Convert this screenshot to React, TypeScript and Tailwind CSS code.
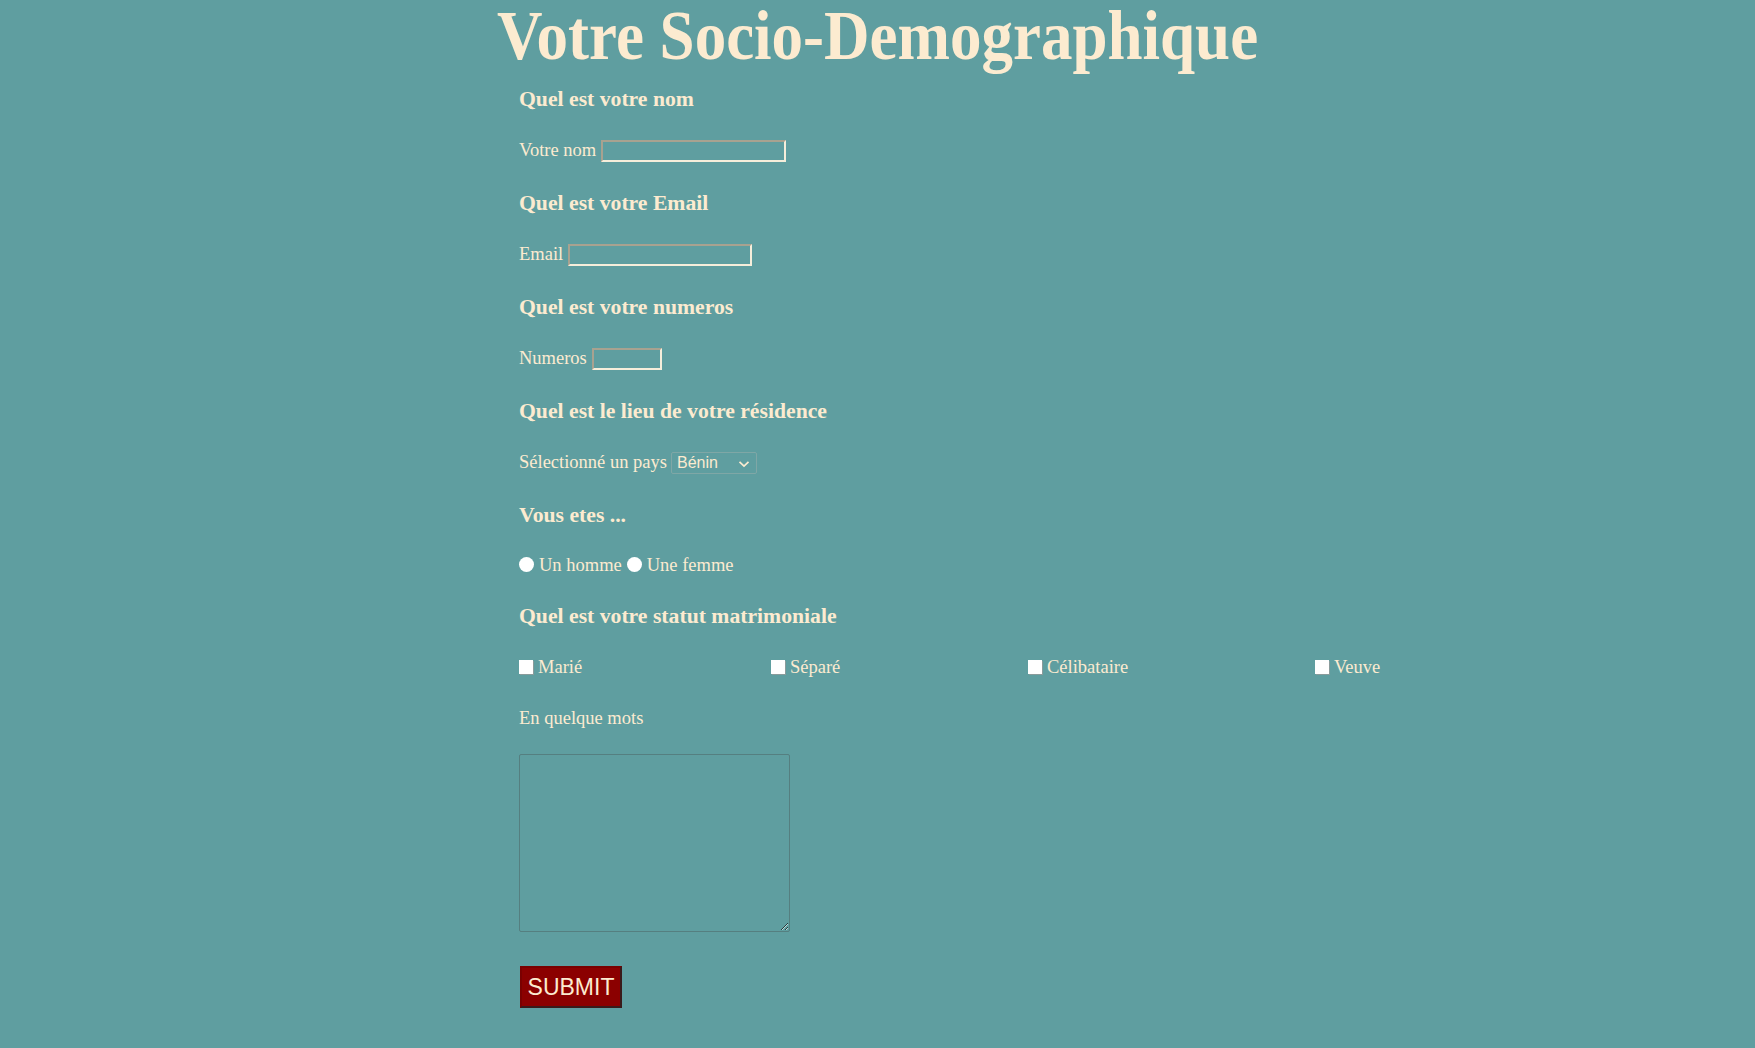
import React from "react";

const serif = { fontFamily: '"Liberation Serif", "Times New Roman", serif' };

function Row({ h = "h-[52px]", children }: { h?: string; children: React.ReactNode }) {
  return <div className={`${h} flex items-center`}>{children}</div>;
}

function Heading({ h, children }: { h?: string; children: React.ReactNode }) {
  return (
    <Row h={h}>
      <h3 className="text-[21.7px] font-bold">{children}</h3>
    </Row>
  );
}

const textInput =
  "h-[22px] bg-transparent border-2 border-t-[#a8a290] border-l-[#a8a290] border-b-[#f6eedb] border-r-[#f6eedb] outline-none";

export default function App() {
  return (
    <div
      className="min-h-[1048px] bg-[#5f9ea0] text-[#fcebd0] text-[18.5px]"
      style={serif}
    >
      {/* Title */}
      <h1 className="h-[73px] text-[69px] leading-[72px] font-bold text-center scale-x-[0.913]">
        Votre Socio-Demographique
      </h1>

      <form className="pl-[519px]">
        <Heading>Quel est votre nom</Heading>
        <Row>
          <label className="flex items-center gap-[5px]">
            Votre nom
            <input type="text" className={`${textInput} w-[185px]`} />
          </label>
        </Row>

        <Heading>Quel est votre Email</Heading>
        <Row>
          <label className="flex items-center gap-[5px]">
            Email
            <input type="email" className={`${textInput} w-[184px]`} />
          </label>
        </Row>

        <Heading>Quel est votre numeros</Heading>
        <Row>
          <label className="flex items-center gap-[5px]">
            Numeros
            <input type="tel" className={`${textInput} w-[70px]`} />
          </label>
        </Row>

        <Heading>Quel est le lieu de votre résidence</Heading>
        <Row>
          <label className="flex items-center gap-[4px]">
            Sélectionné un pays
            <span className="relative w-[86px] h-[22px] border border-[#7fa7a6] rounded-[2px] flex items-center">
              <span
                className="pl-[5px] text-[16px]"
                style={{ fontFamily: '"Liberation Sans", Arial, sans-serif' }}
              >
                Bénin
              </span>
              <svg
                className="absolute right-[6px] top-[7px]"
                width="12"
                height="8"
                viewBox="0 0 12 8"
                fill="none"
                stroke="#fcebd0"
                strokeWidth="1.7"
              >
                <path d="M1.5 1.8 L6 6 L10.5 1.8" />
              </svg>
            </span>
          </label>
        </Row>

        <Heading>Vous etes ...</Heading>
        <Row h="h-[49px]">
          <div className="flex items-center">
            <label className="flex items-center gap-[5px]">
              <span className="w-[15px] h-[15px] rounded-full bg-white mb-[2px]" />
              Un homme
            </label>
            <label className="flex items-center gap-[5px] ml-[5px]">
              <span className="w-[15px] h-[15px] rounded-full bg-white mb-[2px]" />
              Une femme
            </label>
          </div>
        </Row>

        <Heading>Quel est votre statut matrimoniale</Heading>
        <Row>
          <div className="grid grid-cols-[252px_257px_287px_auto]">
            {["Marié", "Séparé", "Célibataire", "Veuve"].map((s) => (
              <label key={s} className="flex items-center gap-[5px]">
                <span className="w-[14px] h-[14px] bg-white mb-[2px] shadow-[1px_1px_0_#8a9b9b]" />
                {s}
              </label>
            ))}
          </div>
        </Row>

        <Row h="h-[49px]">
          <p>En quelque mots</p>
        </Row>

        <textarea className="mt-[11px] block w-[271px] h-[178px] bg-transparent border border-[#557f80] rounded-[2px] outline-none" />

        <button
          type="button"
          className="mt-[34px] ml-[1px] w-[102px] h-[42px] bg-[#8b0000] text-[#fcebd0] text-[23px] border-2 border-t-[#7a0000] border-l-[#7a0000] border-b-[#3a1a1a] border-r-[#3a1a1a]"
          style={{ fontFamily: '"Liberation Sans", Arial, sans-serif' }}
        >
          SUBMIT
        </button>
      </form>
    </div>
  );
}
